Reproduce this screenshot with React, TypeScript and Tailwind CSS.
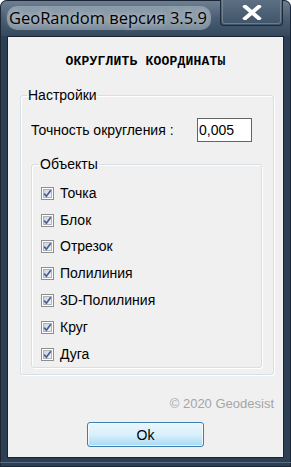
import React from "react";

const ui = { fontFamily: '"Liberation Sans", Arial, sans-serif' };

const items = ["Точка", "Блок", "Отрезок", "Полилиния", "3D-Полилиния", "Круг", "Дуга"];

function CheckBox() {
  return (
    <svg width="13" height="13" viewBox="0 0 13 13" className="shrink-0">
      <defs>
        <linearGradient id="cbg" x1="0" y1="0" x2="1" y2="1">
          <stop offset="0" stopColor="#cdd0d5" />
          <stop offset="1" stopColor="#f4f5f7" />
        </linearGradient>
      </defs>
      <rect x="0.5" y="0.5" width="12" height="12" fill="#fff" stroke="#8e8f8f" />
      <rect x="2.5" y="2.5" width="8" height="8" fill="url(#cbg)" stroke="#b1b4b9" strokeWidth="1" />
      <path d="M3.2 6.6 L5.4 9.2 L9.8 3.2" fill="none" stroke="#4a5e96" strokeWidth="1.7" />
    </svg>
  );
}

export default function App() {
  return (
    <div className="w-[291px] h-[467px] bg-[#2d3f54] rounded-t-[7px] relative flex flex-col px-[7px] pb-[9px] pt-0 overflow-hidden">
      <div className="absolute inset-0 rounded-t-[7px] border border-[#1b2533] pointer-events-none" />
      <div className="absolute left-0 right-0 bottom-[4px] h-px bg-[#5b6c80]" />
      <div className="h-[36px] -mx-[7px] px-[9px] pt-[6px] bg-gradient-to-b from-[#6f8195] via-[#4a5e73] to-[#34485e] flex items-start">
        <span
          className="text-[16.5px] leading-[24px] text-black rounded-[10px] bg-[#a9b5c0]/60 pr-[4px] -ml-[2px] pl-[2px]"
          style={{ fontFamily: '"Open Sans", "Noto Sans", sans-serif', textShadow: "0 0 6px rgba(255,255,255,0.9)" }}
        >
          GeoRandom версия 3.5.9
        </span>
      </div>

      <div className="absolute top-0 right-[8px] w-[63px] h-[26px] rounded-b-[4px] border border-t-0 border-[#1e2a38] bg-gradient-to-b from-[#5c6f83] to-[#3f5469] flex items-center justify-center">
        <div className="absolute inset-[1px] top-0 rounded-b-[3px] border border-t-0 border-[#8796a6]/60" />
        <svg width="20" height="15" viewBox="0 0 20 15" className="relative">
          <path d="M3 1.5 L17 13.5 M17 1.5 L3 13.5" stroke="#ffffff" strokeWidth="3.8" strokeLinecap="square" />
        </svg>
      </div>

      <div className="relative flex-1 border border-[#1a2331] bg-[#f0f0f0] flex flex-col" style={ui}>
        <div
          className="mt-[17px] text-center text-[13px] leading-[15px] font-bold text-black tracking-[0.2px]"
          style={{ fontFamily: '"Liberation Mono", "DejaVu Sans Mono", monospace' }}
        >
          ОКРУГЛИТЬ КООРДИНАТЫ
        </div>

        <fieldset className="mt-[18px] ml-[12px] mr-[9px] h-[288px] border border-[#d5dfe5] rounded-[3px] shadow-[inset_1px_1px_0_#fff,1px_1px_0_#fff]">
          <legend className="ml-[6px] px-[1px] text-[14px] leading-[16px] text-black">Настройки</legend>
          <div className="flex items-center h-[24px] mt-[15px] ml-[10px]">
            <span className="text-[14px] text-black w-[166px]">Точность округления :</span>
            <div className="w-[55px] h-[24px] border border-[#646464] bg-white flex items-center pl-[1px] text-[14px] text-black">
              0,005
            </div>
          </div>

          <fieldset className="mt-[14px] ml-[10px] w-[231px] h-[212px] border border-[#d5dfe5] rounded-[3px] shadow-[inset_1px_1px_0_#fff,1px_1px_0_#fff]">
            <legend className="ml-[7px] px-[1px] text-[14px] leading-[16px] text-black">Объекты</legend>
            <div className="flex flex-col mt-[8px] ml-[9px]">
              {items.map((t) => (
                <div key={t} className="flex items-center gap-[6px] h-[26.8px]">
                  <CheckBox />
                  <span className="text-[14px] text-black">{t}</span>
                </div>
              ))}
            </div>
          </fieldset>
        </fieldset>

        <div className="mt-[21px] mr-[9px] text-right text-[13px] leading-[16px] text-[#a5a5a5]">© 2020 Geodesist</div>

        <div className="flex justify-center mt-[10px]">
          <button className="w-[117px] h-[25px] rounded-[3px] border border-[#3c7fb1] bg-gradient-to-b from-[#eaf6fd] via-[#d9f0fc] to-[#a7d9f5] shadow-[inset_0_0_0_1px_rgba(255,255,255,0.7)] text-[14px] text-black leading-none">
            Ok
          </button>
        </div>
      </div>
    </div>
  );
}
